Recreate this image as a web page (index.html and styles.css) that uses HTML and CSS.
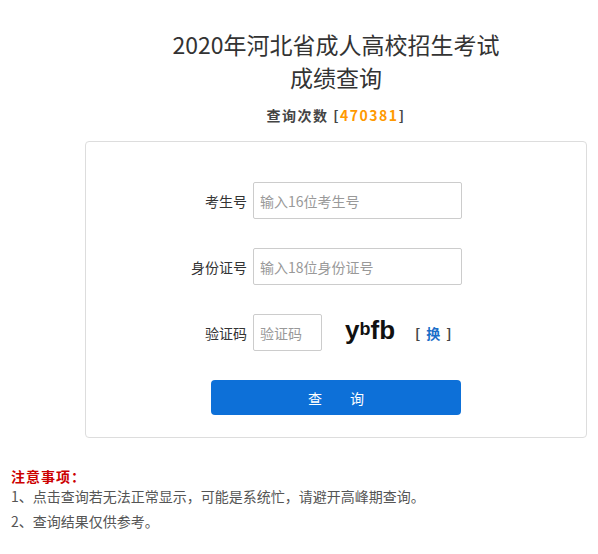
FILE: index.html
```html
<!DOCTYPE html>
<html lang="zh-CN">
<head>
    <meta charset="UTF-8">
    <title>2020年河北省成人高校招生考试成绩查询</title>
    <link rel="stylesheet" href="styles.css">
</head>
<body>
<div class="main">
    <h3 class="title">2020年河北省成人高校招生考试<br>成绩查询</h3>
    <p class="count">查询次数 [<span class="num">470381</span>]</p>
    <div class="panel">
        <div class="row">
            <label class="lbl">考生号</label>
            <input type="text" class="ipt" placeholder="输入16位考生号">
        </div>
        <div class="row">
            <label class="lbl">身份证号</label>
            <input type="text" class="ipt" placeholder="输入18位身份证号">
        </div>
        <div class="row">
            <label class="lbl">验证码</label>
            <input type="text" class="ipt ipt-code" placeholder="验证码">
            <span class="captcha">y<span class="small">b</span>fb</span>
            <span class="change">[<a href="#">换</a>]</span>
        </div>
        <button class="btn">查&emsp;&emsp;询</button>
    </div>
</div>
<div class="notice">
    <p class="notice-title">注意事项：</p>
    <p>1、点击查询若无法正常显示，可能是系统忙，请避开高峰期查询。</p>
    <p>2、查询结果仅供参考。</p>
</div>
</body>
</html>
```
FILE: styles.css
```css
body {
    margin: 0;
    font-family: "Noto Sans CJK SC", "Liberation Sans", sans-serif;
    font-size: 14px;
    color: #333;
    background: #fff;
}
.main {
    width: 502px;
    margin-left: 85px;
}
.title {
    margin: 28px 0 0;
    font-size: 23px;
    font-weight: normal;
    line-height: 33px;
    text-align: center;
    color: #333;
}
.count {
    margin: 10px 0 0;
    font-weight: bold;
    line-height: 22px;
    letter-spacing: 1.5px;
    text-align: center;
    color: #444;
}
.count .num { color: #f90; }
.panel {
    margin-top: 15px;
    border: 1px solid #ddd;
    border-radius: 4px;
    padding: 40px 0 22px;
}
.row {
    display: flex;
    align-items: center;
    margin-bottom: 29px;
}
.lbl {
    width: 161px;
    text-align: right;
    margin-right: 6px;
    color: #333;
}
.ipt {
    box-sizing: border-box;
    width: 209px;
    height: 37px;
    border: 1px solid #ccc;
    border-radius: 2px;
    padding: 0 6px;
    font-family: inherit;
    font-size: 14px;
    color: #333;
}
.ipt::placeholder { color: #999; }
.ipt-code { width: 69px; }
.captcha {
    margin-left: 23px;
    font-family: "Liberation Sans", sans-serif;
    font-size: 26px;
    font-weight: bold;
    color: #111;
    line-height: 1;
    margin-top: -6px;
}
.captcha .small {
    font-size: 18px;
    vertical-align: 4px;
}
.change {
    margin-left: 20px;
    font-weight: bold;
    color: #444;
}
.change a {
    margin: 0 6px;
    color: #1a6fc9;
    text-decoration: none;
}
.btn {
    display: block;
    width: 250px;
    height: 35px;
    margin-left: 125px;
    border: none;
    border-radius: 4px;
    background: #0d70d8;
    color: #fff;
    font-family: inherit;
    font-size: 14px;
    cursor: pointer;
}
.notice {
    margin: 28px 0 0 11px;
    color: #555;
}
.notice p {
    margin: 0 0 5px;
    line-height: 20px;
}
.notice .notice-title {
    margin-bottom: 0;
    color: #c00;
    font-weight: bold;
    letter-spacing: 1px;
}
```
